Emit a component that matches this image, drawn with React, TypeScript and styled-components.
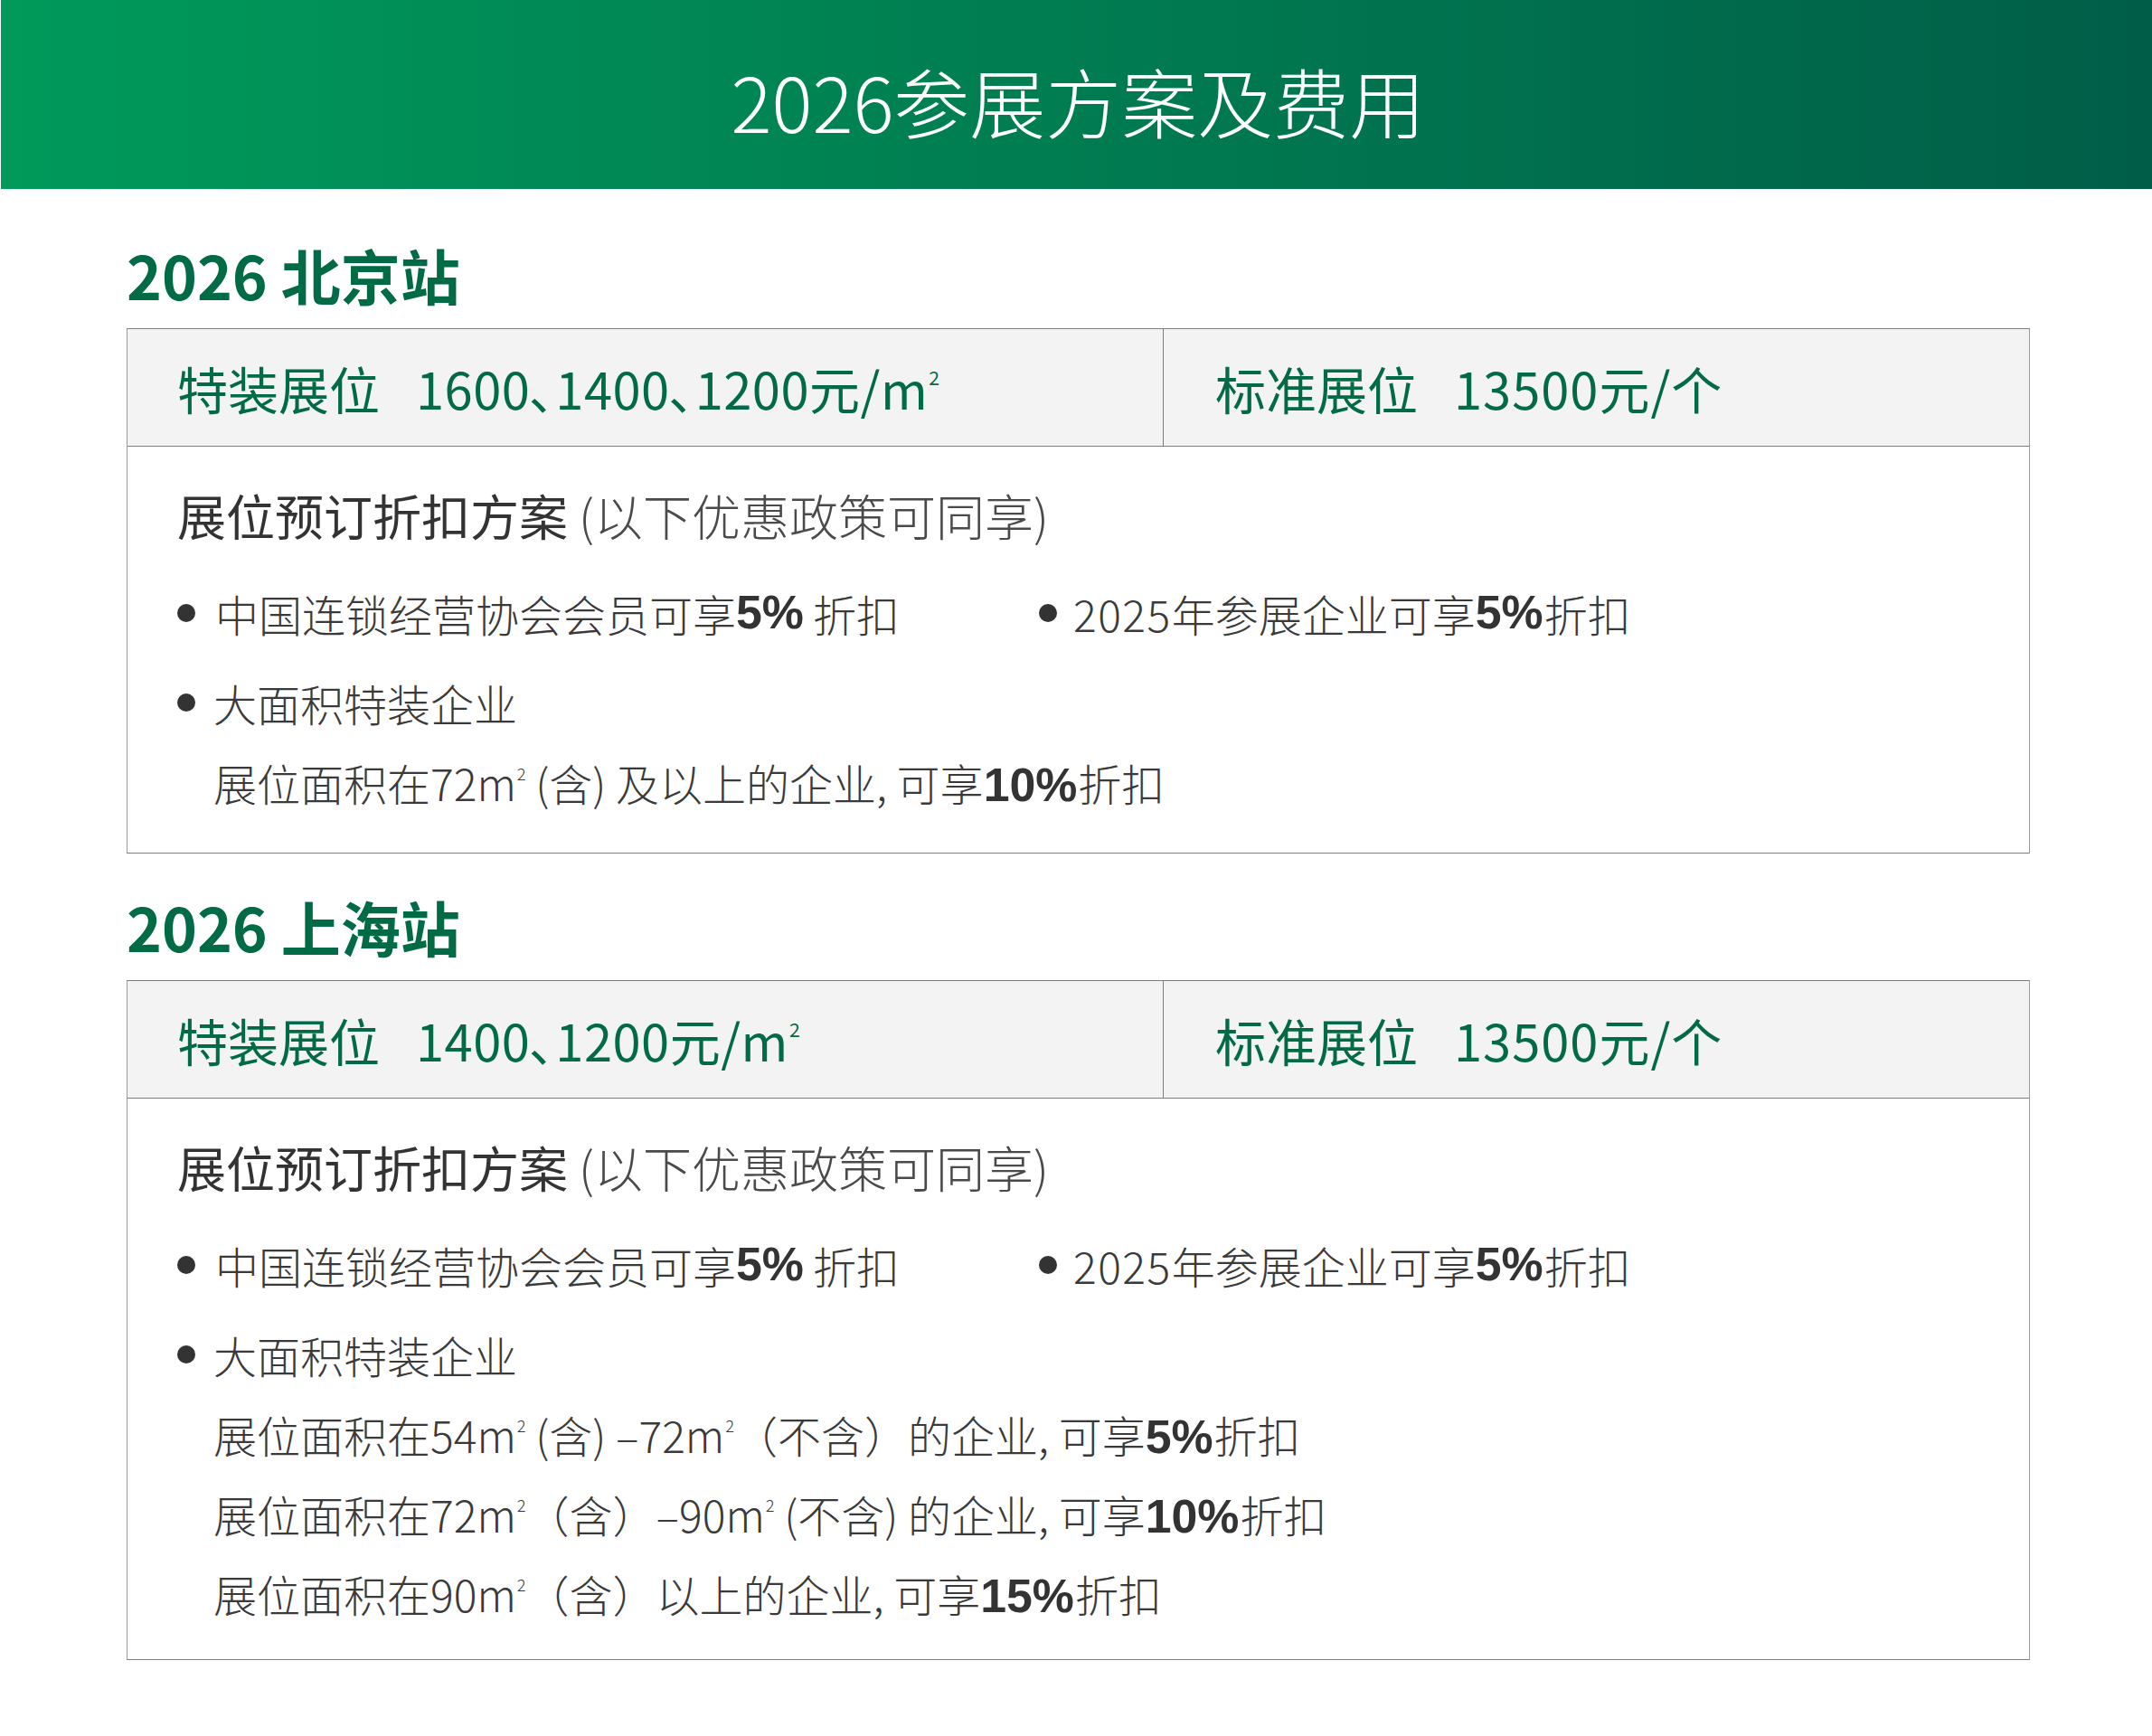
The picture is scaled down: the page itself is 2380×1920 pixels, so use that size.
import React from "react";
import styled, { createGlobalStyle } from "styled-components";

const Global = createGlobalStyle`
  html, body { margin: 0; padding: 0; background: #ffffff; }
  body {
    font-family: "Noto Sans CJK SC", "Noto Sans", sans-serif;
    color: #3a3a3a;
  }
`;

const Page = styled.div`
  width: 2380px;
  height: 1920px;
  background: #ffffff;
  overflow: hidden;
`;

const Banner = styled.header`
  height: 209px;
  box-sizing: border-box;
  padding-top: 12px;
  margin-left: 1px;
  background: linear-gradient(90deg, #009a5b 0%, #007f52 45%, #005e48 100%);
  display: flex;
  align-items: center;
  justify-content: center;
`;

const BannerTitle = styled.h1`
  margin: 0;
  padding-left: 4px;
  font-size: 84px;
  line-height: 1;
  font-weight: 300;
  color: #ffffff;
  letter-spacing: 0;
`;

const Section = styled.section<{ $top: number }>`
  margin: ${(p) => p.$top}px 135px 0 140px;
`;

const SectionTitle = styled.h2`
  margin: 0 0 27px 0;
  font-size: 66px;
  line-height: 66px;
  font-weight: 700;
  color: #006b45;
  letter-spacing: 0;
`;

const Table = styled.div`
  border: 1px solid #7d7d7d;
  border-left-color: #9a9a9a;
  border-right-color: #9a9a9a;
`;

const HeaderRow = styled.div`
  display: grid;
  grid-template-columns: 1145px 1fr;
  height: 129px;
  background: #f3f3f3;
  border-bottom: 1px solid #7d7d7d;
`;

const HeaderCell = styled.div<{ $divider?: boolean }>`
  display: flex;
  align-items: center;
  padding-left: ${(p) => (p.$divider ? 57 : 55)}px;
  border-left: ${(p) => (p.$divider ? "1px solid #7d7d7d" : "none")};
  font-size: 56px;
  font-weight: 400;
  color: #006b45;
  white-space: nowrap;
`;

const HeaderLabel = styled.span`
  margin-right: 40px;
`;

const Price = styled.span<{ $spacing: number }>`
  letter-spacing: ${(p) => p.$spacing}px;
`;

const Sep = styled.span`
  letter-spacing: 0;
`;

const Body = styled.div<{ $bottom: number }>`
  padding: 40px 0 ${(p) => p.$bottom}px 55px;
`;

const BodyHeading = styled.div`
  font-size: 54px;
  line-height: 72px;
  font-weight: 400;
  color: #333333;
  margin-bottom: 28px;
  white-space: nowrap;
`;

const HeadingNote = styled.span`
  font-weight: 300;
  color: #4a4a4a;
  margin-left: 12px;
`;

const BulletGrid = styled.div`
  display: grid;
  grid-template-columns: 953px 1fr;
  margin-bottom: 11px;
`;

const Item = styled.div`
  display: flex;
  align-items: center;
  height: 88px;
  font-size: 48px;
  line-height: 88px;
  font-weight: 300;
  color: #3a3a3a;
  white-space: nowrap;
`;

const Year = styled.span`
  letter-spacing: 1.5px;
`;

const Dot = styled.span<{ $gap: number }>`
  width: 20px;
  height: 20px;
  border-radius: 50%;
  background: #333333;
  margin-right: ${(p) => p.$gap}px;
  flex: none;
`;

const SubLine = styled.div`
  height: 88px;
  padding-left: 40px;
  font-size: 48px;
  line-height: 88px;
  font-weight: 300;
  color: #3a3a3a;
  white-space: nowrap;
`;

const Strong = styled.b<{ $space?: boolean }>`
  font-weight: 700;
  font-size: 1.08em;
  line-height: 1;
  color: #333333;
  font-family: "Liberation Sans", "Noto Sans CJK SC", sans-serif;
  margin-right: ${(p) => (p.$space ? 10 : 1)}px;
`;

const Sup = styled.sup`
  font-size: 0.38em;
  line-height: 0;
  vertical-align: 1.25em;
  margin-left: 1px;
`;

const M2 = () => (
  <>
    m<Sup>2</Sup>
  </>
);

type Props = {
  top: number;
  city: string;
  prices: string[];
  subs: React.ReactNode[];
  bottom: number;
};

const Venue = ({ top, city, prices, subs, bottom }: Props) => (
  <Section $top={top}>
    <SectionTitle>2026 {city}</SectionTitle>
    <Table>
      <HeaderRow>
        <HeaderCell>
          <HeaderLabel>特装展位</HeaderLabel>
          <Price $spacing={0.5}>
            {prices.map((p, i) => (
              <React.Fragment key={p}>
                {i > 0 && <Sep>､</Sep>}
                {p}
              </React.Fragment>
            ))}
            元/<M2 />
          </Price>
        </HeaderCell>
        <HeaderCell $divider>
          <HeaderLabel>标准展位</HeaderLabel>
          <Price $spacing={1}>13500元/个</Price>
        </HeaderCell>
      </HeaderRow>
      <Body $bottom={bottom}>
        <BodyHeading>
          展位预订折扣方案<HeadingNote>(以下优惠政策可同享)</HeadingNote>
        </BodyHeading>
        <BulletGrid>
          <Item>
            <Dot $gap={22} />
            中国连锁经营协会会员可享<Strong $space>5%</Strong>折扣
          </Item>
          <Item>
            <Dot $gap={18} />
            <Year>2025</Year>年参展企业可享<Strong>5%</Strong>折扣
          </Item>
        </BulletGrid>
        <Item>
          <Dot $gap={20} />
          大面积特装企业
        </Item>
        {subs.map((s, i) => (
          <SubLine key={i}>{s}</SubLine>
        ))}
      </Body>
    </Table>
  </Section>
);

export default function App() {
  return (
    <Page>
      <Global />
      <Banner>
        <BannerTitle>2026参展方案及费用</BannerTitle>
      </Banner>
      <Venue
        top={61}
        city="北京站"
        bottom={34}
        prices={["1600", "1400", "1200"]}
        subs={[
          <>
            展位面积在72<M2 /> (含) 及以上的企业, 可享<Strong>10%</Strong>折扣
          </>,
        ]}
      />
      <Venue
        top={47}
        city="上海站"
        bottom={29}
        prices={["1400", "1200"]}
        subs={[
          <>
            展位面积在54<M2 /> (含) –72<M2 />（不含）的企业, 可享<Strong>5%</Strong>折扣
          </>,
          <>
            展位面积在72<M2 />（含）–90<M2 /> (不含) 的企业, 可享<Strong>10%</Strong>折扣
          </>,
          <>
            展位面积在90<M2 />（含）以上的企业, 可享<Strong>15%</Strong>折扣
          </>,
        ]}
      />
    </Page>
  );
}
